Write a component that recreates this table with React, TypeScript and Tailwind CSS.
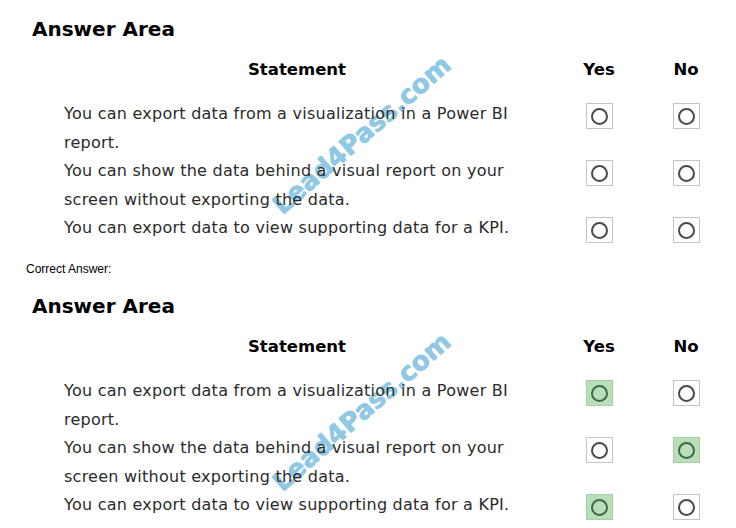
import React from "react";

type Row = { lines: string[]; answer: "yes" | "no" };

const rows: Row[] = [
  {
    lines: ["You can export data from a visualization in a Power BI", "report."],
    answer: "yes",
  },
  {
    lines: [
      "You can show the data behind a visual report on your",
      "screen without exporting the data.",
    ],
    answer: "no",
  },
  {
    lines: ["You can export data to view supporting data for a KPI."],
    answer: "yes",
  },
];

function Radio({ checked }: { checked: boolean }) {
  return (
    <div
      className={`w-[27px] h-[26px] flex items-center justify-center border ${
        checked
          ? "bg-[#b9deb9] border-[#a6cfa6]"
          : "bg-white border-[#c4c4c4]"
      }`}
    >
      <div
        className={`w-[17px] h-[17px] rounded-full border-[2.5px] ${
          checked ? "border-[#3d6b45]" : "border-[#4a4a4a]"
        }`}
      />
    </div>
  );
}

function AnswerArea({ showAnswers }: { showAnswers: boolean }) {
  return (
    <div className="relative">
      {/* watermark, sits under the statements */}
      <div className="absolute z-0 left-[362px] top-[118px] -translate-x-1/2 -translate-y-1/2 -rotate-[41deg] pointer-events-none text-[26px] font-bold text-[#84c4e4] opacity-90 [text-shadow:0_0_1px_#4a9ccc,1px_1px_0_#ffffff] whitespace-nowrap">
        Lead4Pass.com
      </div>

      <h2 className="relative z-10 pl-[32px] text-[20px] leading-[24px] font-bold text-black">
        Answer Area
      </h2>

      <div className="relative z-10 grid grid-cols-[466px_138px_36px] pl-[64px] mt-[19px] text-[16.5px] leading-[20px] font-bold text-black">
        <div className="text-center">Statement</div>
        <div className="text-center">Yes</div>
        <div className="text-center">No</div>
      </div>

      <div className="relative z-10 mt-[20px]">
        {rows.map((row, i) => (
          <div
            key={i}
            className="grid grid-cols-[466px_138px_36px] pl-[64px] text-[16px] tracking-[0.25px] leading-[28.5px] text-[#2b2b2b]"
          >
            <div className="whitespace-nowrap">
              {row.lines.map((line, j) => (
                <div key={j}>{line}</div>
              ))}
            </div>
            <div className="flex justify-center pt-[3px]">
              <Radio checked={showAnswers && row.answer === "yes"} />
            </div>
            <div className="flex justify-center pt-[3px]">
              <Radio checked={showAnswers && row.answer === "no"} />
            </div>
          </div>
        ))}
      </div>
    </div>
  );
}

export default function App() {
  return (
    <div className="w-[736px] h-[528px] bg-white overflow-hidden pt-[17px] font-['DejaVu_Sans',sans-serif]">
      <AnswerArea showAnswers={false} />
      <div className="pl-[26px] mt-[18px] text-[12px] leading-[16px] text-black font-['Liberation_Sans',Arial,sans-serif]">
        Correct Answer:
      </div>
      <div className="mt-[17px]">
        <AnswerArea showAnswers={true} />
      </div>
    </div>
  );
}
